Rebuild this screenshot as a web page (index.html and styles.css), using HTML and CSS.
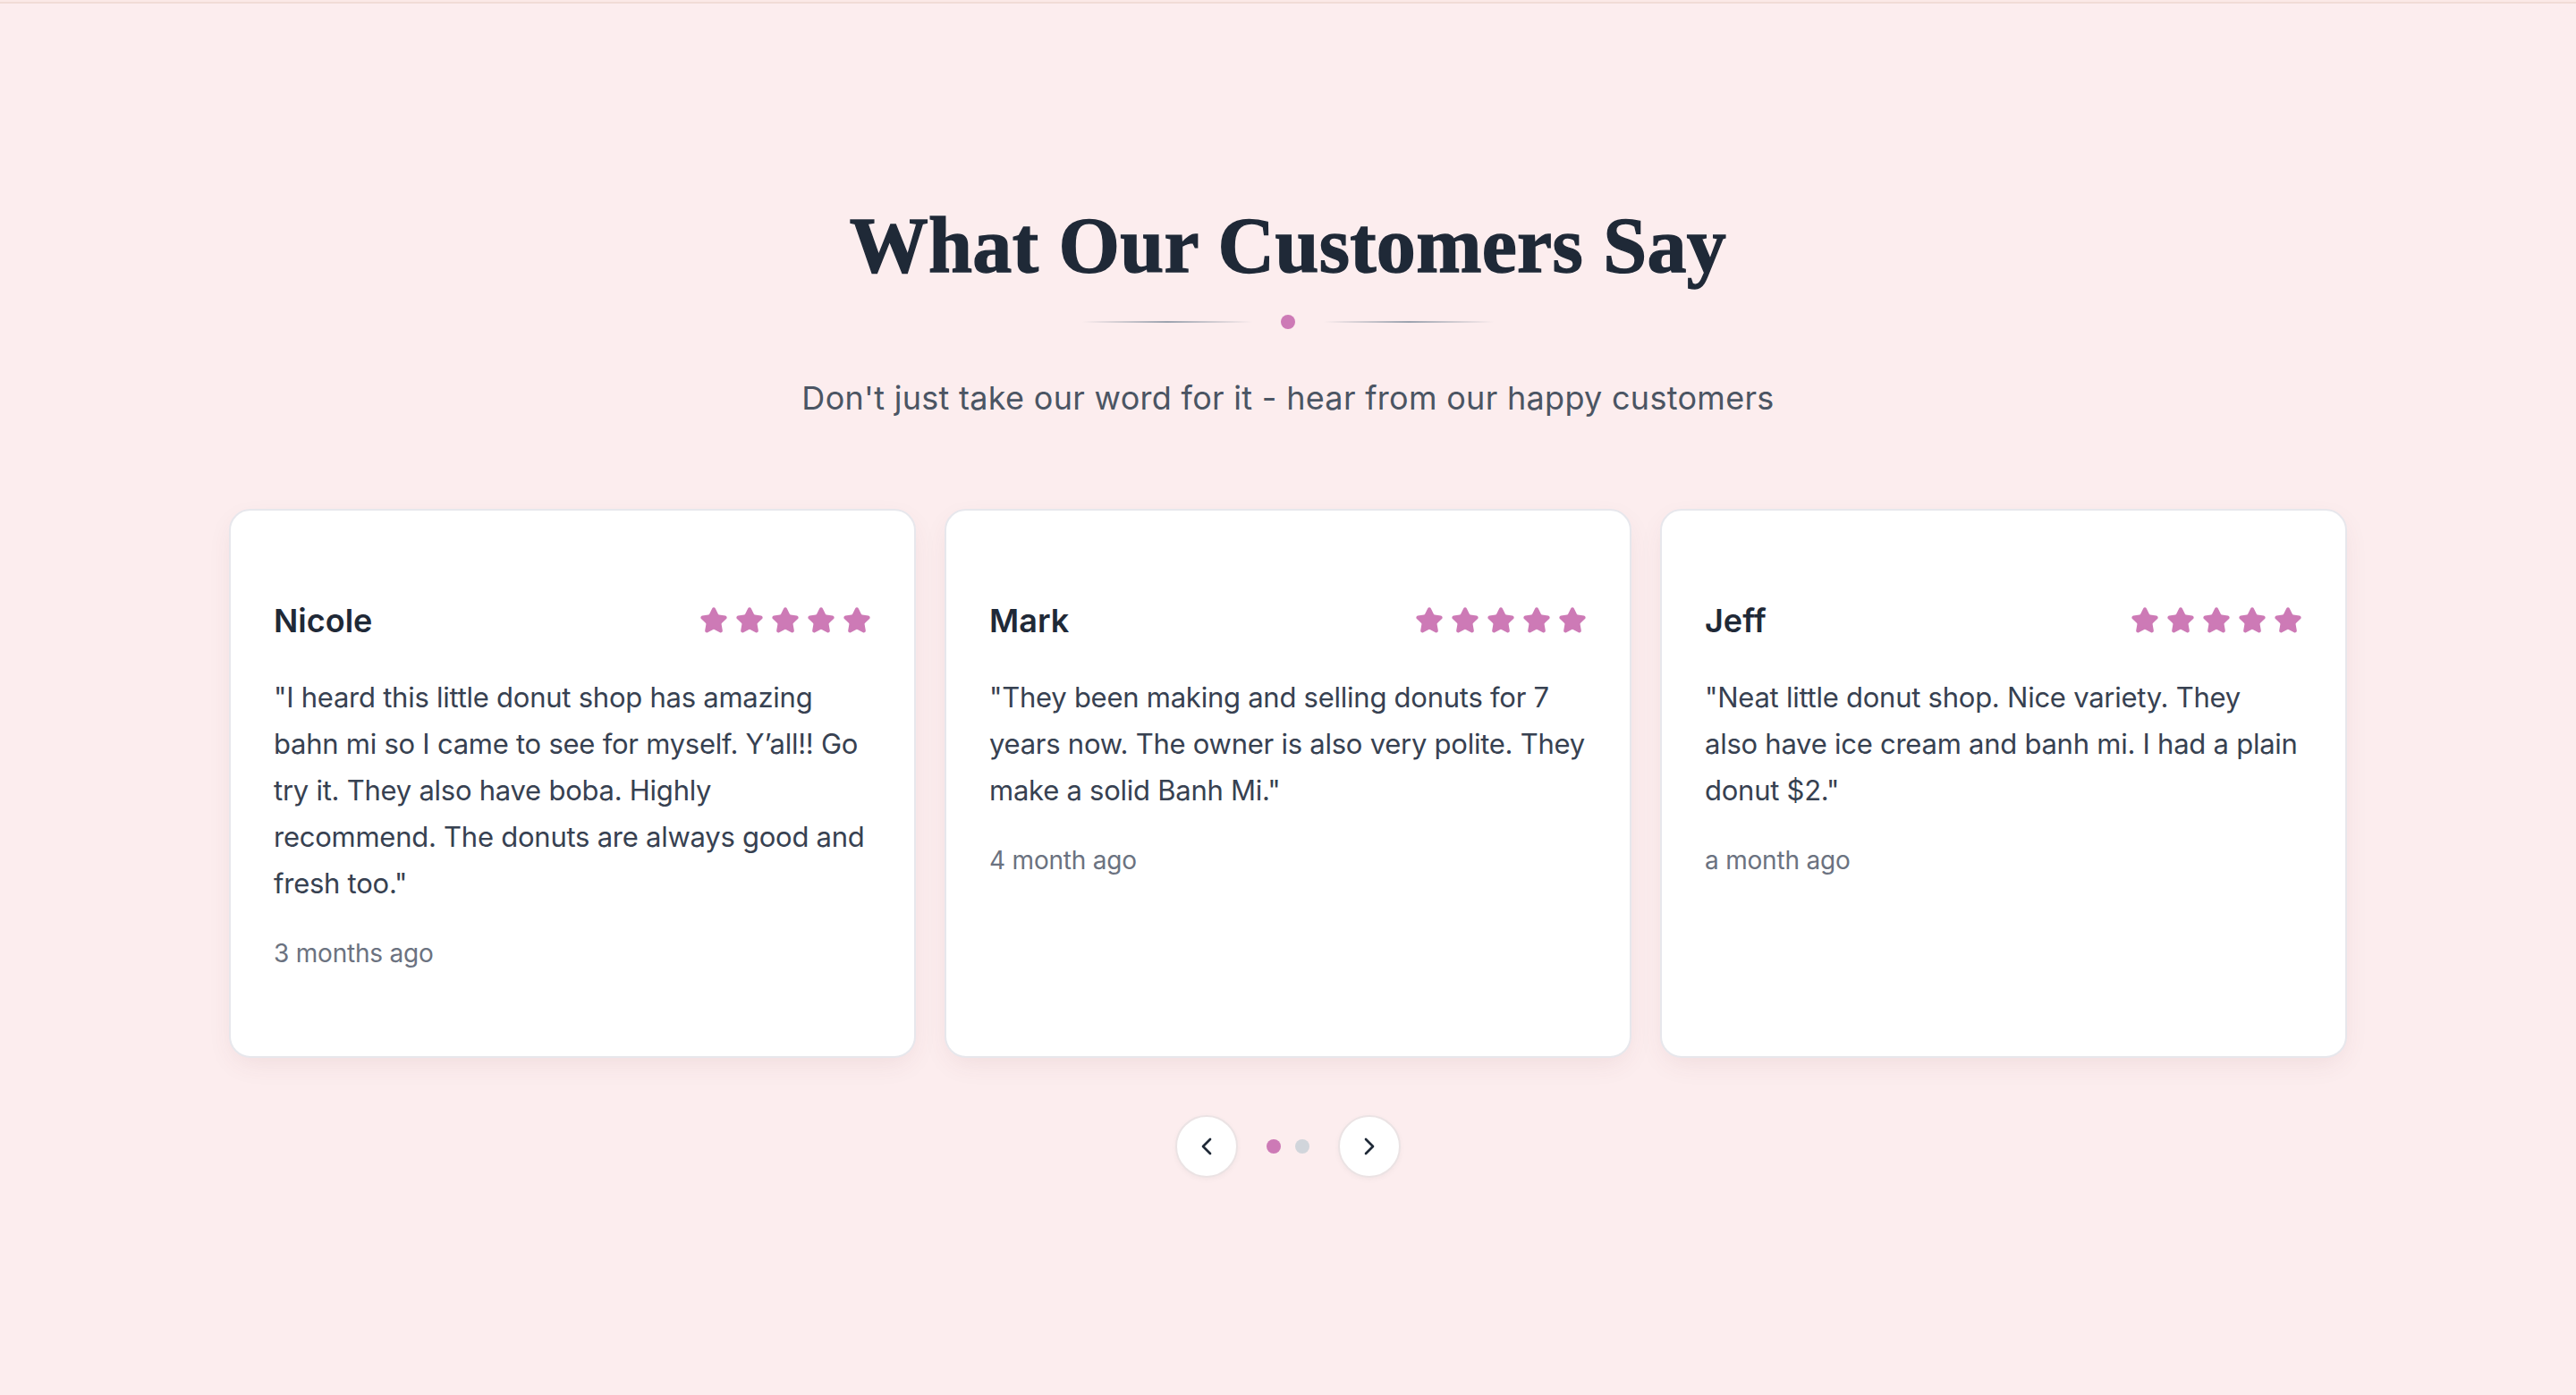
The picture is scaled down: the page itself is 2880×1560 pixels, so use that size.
FILE: index.html
```html
<!DOCTYPE html>
<html lang="en">
<head>
<meta charset="utf-8">
<title>What Our Customers Say</title>
<link rel="stylesheet" href="styles.css">
</head>
<body>
<svg class="defs" width="0" height="0" aria-hidden="true">
  <symbol id="star" viewBox="0 0 24 24">
    <path d="M11.525 2.295a.53.53 0 0 1 .95 0l2.31 4.679a2.123 2.123 0 0 0 1.595 1.16l5.166.756a.53.53 0 0 1 .294.904l-3.736 3.638a2.123 2.123 0 0 0-.611 1.878l.882 5.14a.53.53 0 0 1-.771.56l-4.618-2.428a2.122 2.122 0 0 0-1.973 0L6.396 21.01a.53.53 0 0 1-.77-.56l.881-5.139a2.122 2.122 0 0 0-.611-1.879L2.16 9.795a.53.53 0 0 1 .294-.906l5.165-.755a2.122 2.122 0 0 0 1.597-1.16z"/>
  </symbol>
</svg>
<div class="topbar"></div>
<section class="testimonials">
  <h2 class="title">What Our Customers Say</h2>
  <div class="divider">
    <span class="line"></span>
    <span class="dot"></span>
    <span class="line"></span>
  </div>
  <p class="subtitle">Don't just take our word for it - hear from our happy customers</p>

  <div class="cards">
    <article class="card">
      <div class="card-head">
        <h3 class="name">Nicole</h3>
        <div class="stars">
          <svg class="star"><use href="#star"/></svg>
          <svg class="star"><use href="#star"/></svg>
          <svg class="star"><use href="#star"/></svg>
          <svg class="star"><use href="#star"/></svg>
          <svg class="star"><use href="#star"/></svg>
        </div>
      </div>
      <p class="quote">"I heard this little donut shop has amazing bahn mi so I came to see for myself. Y’all!! Go try it. They also have boba. Highly recommend. The donuts are always good and fresh too."</p>
      <p class="time">3 months ago</p>
    </article>
    <article class="card">
      <div class="card-head">
        <h3 class="name">Mark</h3>
        <div class="stars">
          <svg class="star"><use href="#star"/></svg>
          <svg class="star"><use href="#star"/></svg>
          <svg class="star"><use href="#star"/></svg>
          <svg class="star"><use href="#star"/></svg>
          <svg class="star"><use href="#star"/></svg>
        </div>
      </div>
      <p class="quote">"They been making and selling donuts for 7 years now. The owner is also very polite. They make a solid Banh Mi."</p>
      <p class="time">4 month ago</p>
    </article>
    <article class="card">
      <div class="card-head">
        <h3 class="name">Jeff</h3>
        <div class="stars">
          <svg class="star"><use href="#star"/></svg>
          <svg class="star"><use href="#star"/></svg>
          <svg class="star"><use href="#star"/></svg>
          <svg class="star"><use href="#star"/></svg>
          <svg class="star"><use href="#star"/></svg>
        </div>
      </div>
      <p class="quote">"Neat little donut shop. Nice variety. They<br>also have ice cream and banh mi. I had a plain donut $2."</p>
      <p class="time">a month ago</p>
    </article>
  </div>

  <div class="nav">
    <button class="nav-btn" aria-label="Previous">
      <svg viewBox="0 0 24 24"><path d="m15 18-6-6 6-6"/></svg>
    </button>
    <div class="dots">
      <span class="pager active"></span>
      <span class="pager"></span>
    </div>
    <button class="nav-btn" aria-label="Next">
      <svg viewBox="0 0 24 24"><path d="m9 18 6-6-6-6"/></svg>
    </button>
  </div>
</section>
</body>
</html>
```

FILE: styles.css
```css
* { box-sizing: border-box; }

html, body {
  margin: 0;
  padding: 0;
  background: #fcedee;
}

body {
  font-family: Inter, "Noto Sans", "Liberation Sans", sans-serif;
  min-height: 1560px;
}

.defs {
  position: absolute;
  width: 0;
  height: 0;
  overflow: hidden;
}

.topbar {
  height: 4px;
  background: #fbe9e7;
  border-bottom: 2px solid #f1dcd6;
}

.testimonials {
  padding-top: 227px;
  display: flex;
  flex-direction: column;
  align-items: center;
}

.title {
  margin: 0;
  font-family: "Liberation Serif", "Times New Roman", serif;
  font-weight: 700;
  font-size: 88px;
  line-height: 88px;
  color: #1f2937;
  letter-spacing: 0.3px;
  -webkit-text-stroke: 1.4px #1f2937;
}

.divider {
  margin-top: 33px;
  height: 16px;
  display: flex;
  align-items: center;
  gap: 32px;
}

.line {
  width: 190px;
  height: 2px;
  background: linear-gradient(to right, rgba(156,163,175,0), #9ca3af, rgba(156,163,175,0));
}

.dot {
  width: 16px;
  height: 16px;
  border-radius: 50%;
  background: #cd7ab6;
}

.subtitle {
  margin: 52px 0 0;
  font-size: 36px;
  line-height: 51px;
  letter-spacing: 0.3px;
  color: #4b5563;
}

.cards {
  margin-top: 98px;
  width: 2368px;
  display: grid;
  grid-template-columns: repeat(3, 1fr);
  gap: 32px;
}

.card {
  background: #fff;
  border: 2px solid #e7e7ec;
  border-radius: 24px;
  padding: 95px 48px 95px;
  box-shadow: 0 10px 30px -6px rgba(120, 60, 70, 0.10);
}

.card-head {
  display: flex;
  justify-content: space-between;
  align-items: center;
  height: 56px;
}

.name {
  margin: 0;
  font-size: 36px;
  line-height: 56px;
  font-weight: 600;
  color: #1f2937;
}

.stars {
  display: flex;
  gap: 8px;
}

.star {
  width: 32px;
  height: 32px;
  fill: #cd7ab6;
  stroke: #cd7ab6;
  stroke-width: 2;
  stroke-linejoin: round;
  stroke-linecap: round;
}

.quote {
  margin: 32px 0 0;
  font-size: 31px;
  line-height: 52px;
  letter-spacing: -0.25px;
  color: #374151;
}

.time {
  margin: 32px 0 0;
  font-size: 28px;
  line-height: 40px;
  letter-spacing: -0.2px;
  color: #6b7280;
}

.nav {
  margin-top: 64px;
  display: flex;
  align-items: center;
  gap: 32px;
}

.nav-btn {
  width: 70px;
  height: 70px;
  padding: 0;
  border-radius: 50%;
  background: #fff;
  border: 2px solid #ebe3e4;
  box-shadow: 0 2px 6px rgba(0, 0, 0, 0.04);
  display: flex;
  align-items: center;
  justify-content: center;
}

.nav-btn svg {
  width: 32px;
  height: 32px;
  fill: none;
  stroke: #1f2937;
  stroke-width: 2;
  stroke-linecap: round;
  stroke-linejoin: round;
}

.dots {
  display: flex;
  gap: 16px;
}

.pager {
  width: 16px;
  height: 16px;
  border-radius: 50%;
  background: #d1d5db;
}

.pager.active {
  background: #cd7ab6;
}
```
